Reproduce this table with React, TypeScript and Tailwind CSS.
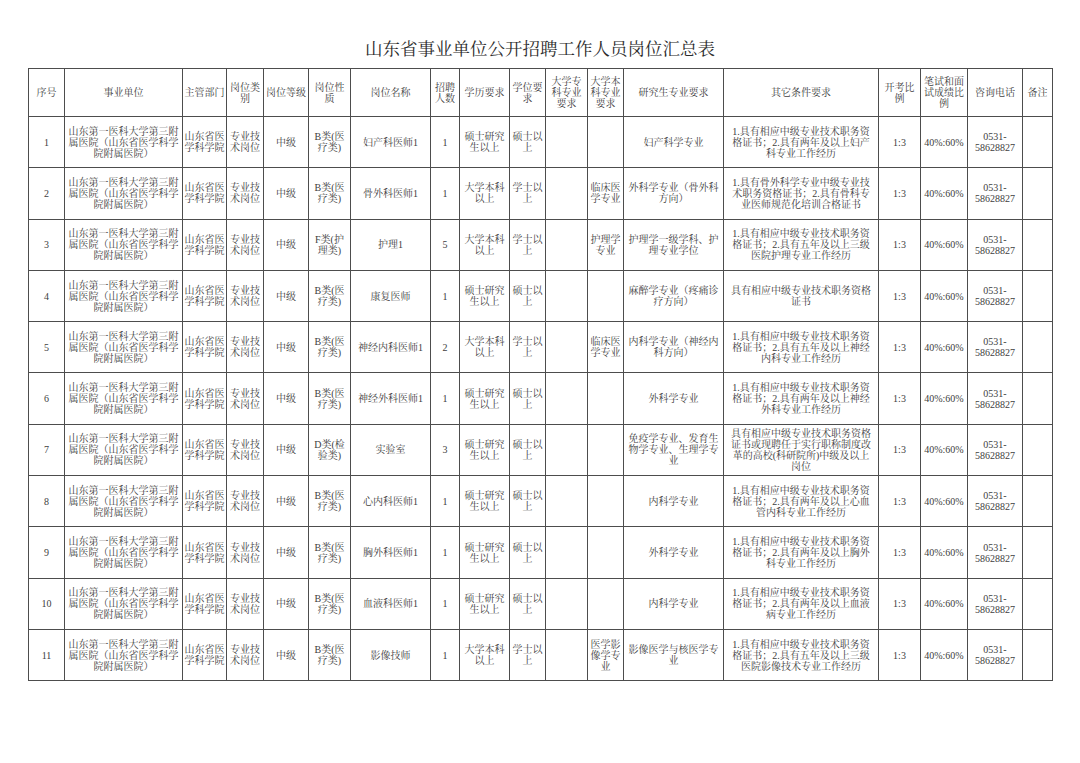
import React from "react";

const cols = [36, 118, 44, 37, 45, 42, 80, 29, 50, 36, 42, 36, 100, 155, 42, 47, 55, 30];

const headers = [
  "序号",
  "事业单位",
  "主管部门",
  "岗位类|别",
  "岗位等级",
  "岗位性|质",
  "岗位名称",
  "招聘|人数",
  "学历要求",
  "学位要|求",
  "大学专|科专业|要求",
  "大学本|科专业|要求",
  "研究生专业要求",
  "其它条件要求",
  "开考比|例",
  "笔试和面|试成绩比|例",
  "咨询电话",
  "备注",
];

const unit = "山东第一医科大学第三附|属医院（山东省医学科学|院附属医院）";
const dept = "山东省医|学科学院";
const cat = "专业技|术岗位";
const B = "B类(医|疗类)";
const ms = "硕士研究|生以上";
const msd = "硕士以|上";
const bs = "大学本科|以上";
const bsd = "学士以|上";

// [no, nature, name, count, edu, degree, junior, bachelor, grad, other]
const rows: string[][] = [
  ["1", B, "妇产科医师1", "1", ms, msd, "", "", "妇产科学专业", "1.具有相应中级专业技术职务资|格证书；2.具有两年及以上妇产|科专业工作经历"],
  ["2", B, "骨外科医师1", "1", bs, bsd, "", "临床医|学专业", "外科学专业（骨外科|方向）", "1.具有骨外科学专业中级专业技|术职务资格证书；2.具有骨科专|业医师规范化培训合格证书"],
  ["3", "F类(护|理类)", "护理1", "5", bs, bsd, "", "护理学|专业", "护理学一级学科、护|理专业学位", "1.具有相应中级专业技术职务资|格证书；2.具有五年及以上三级|医院护理专业工作经历"],
  ["4", B, "康复医师", "1", ms, msd, "", "", "麻醉学专业（疼痛诊|疗方向）", "具有相应中级专业技术职务资格|证书"],
  ["5", B, "神经内科医师1", "2", bs, bsd, "", "临床医|学专业", "内科学专业（神经内|科方向）", "1.具有相应中级专业技术职务资|格证书；2.具有五年及以上神经|内科专业工作经历"],
  ["6", B, "神经外科医师1", "1", ms, msd, "", "", "外科学专业", "1.具有相应中级专业技术职务资|格证书；2.具有两年及以上神经|外科专业工作经历"],
  ["7", "D类(检|验类)", "实验室", "3", ms, msd, "", "", "免疫学专业、发育生|物学专业、生理学专|业", "具有相应中级专业技术职务资格|证书或现聘任于实行职称制度改|革的高校(科研院所)中级及以上|岗位"],
  ["8", B, "心内科医师1", "1", ms, msd, "", "", "内科学专业", "1.具有相应中级专业技术职务资|格证书；2.具有两年及以上心血|管内科专业工作经历"],
  ["9", B, "胸外科医师1", "1", ms, msd, "", "", "外科学专业", "1.具有相应中级专业技术职务资|格证书；2.具有两年及以上胸外|科专业工作经历"],
  ["10", B, "血液科医师1", "1", ms, msd, "", "", "内科学专业", "1.具有相应中级专业技术职务资|格证书；2.具有两年及以上血液|病专业工作经历"],
  ["11", B, "影像技师", "1", bs, bsd, "", "医学影|像学专|业", "影像医学与核医学专|业", "1.具有相应中级专业技术职务资|格证书；2.具有五年及以上三级|医院影像技术专业工作经历"],
];

function Lines({ text }: { text: string }) {
  const parts = text.split("|");
  return (
    <>
      {parts.map((p, i) => (
        <React.Fragment key={i}>
          {i > 0 && <br />}
          {p}
        </React.Fragment>
      ))}
    </>
  );
}

const cell = "border border-[#4d4d4d] p-0 text-center align-middle";

export default function App() {
  return (
    <div
      className="w-[1080px] h-[763px] bg-white overflow-hidden"
      style={{ fontFamily: '"Liberation Serif", "Noto Serif CJK SC", "Noto Sans CJK SC", serif' }}
    >
      <div className="pt-[37px] h-[61px] text-center text-[17.5px] leading-[24px] text-[#2b2b2b]">
        山东省事业单位公开招聘工作人员岗位汇总表
      </div>
      <div className="pt-[7px] pl-[28px]">
        <table className="table-fixed border-collapse w-[1024px] text-[10px] leading-[11px] text-[#404040] border border-[#4d4d4d]">
          <colgroup>
            {cols.map((w, i) => (
              <col key={i} style={{ width: w }} />
            ))}
          </colgroup>
          <thead>
            <tr className="h-[48px]">
              {headers.map((h, i) => (
                <th key={i} className={cell + " font-normal"}>
                  <Lines text={h} />
                </th>
              ))}
            </tr>
          </thead>
          <tbody>
            {rows.map((r, idx) => {
              const cells = [
                r[0],
                unit,
                dept,
                cat,
                "中级",
                r[1],
                r[2],
                r[3],
                r[4],
                r[5],
                r[6],
                r[7],
                r[8],
                r[9],
                "1:3",
                "40%:60%",
                "0531-|58628827",
                "",
              ];
              return (
                <tr key={idx} className="h-[51.3px]">
                  {cells.map((c, i) => (
                    <td key={i} className={cell}>
                      <Lines text={c} />
                    </td>
                  ))}
                </tr>
              );
            })}
          </tbody>
        </table>
      </div>
    </div>
  );
}
